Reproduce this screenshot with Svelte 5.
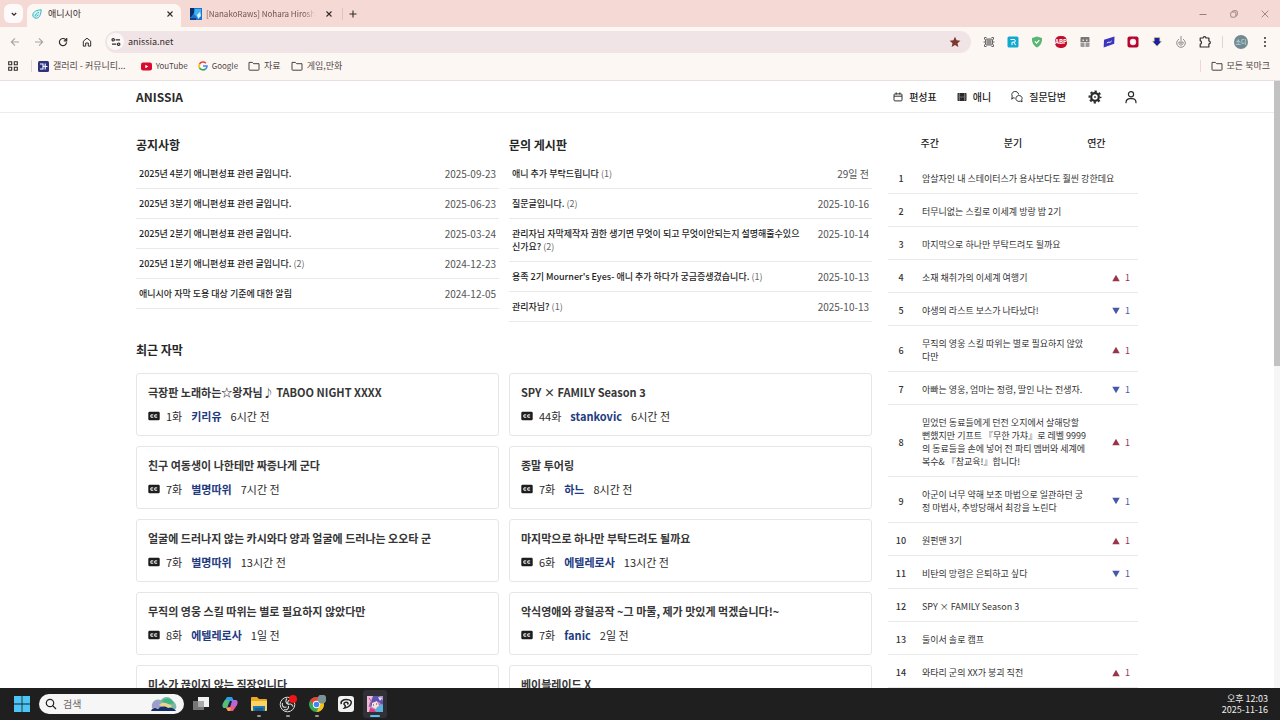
<script>
  const notices = [
    { title: '2025년 4분기 애니편성표 관련 글입니다.', date: '2025-09-23' },
    { title: '2025년 3분기 애니편성표 관련 글입니다.', date: '2025-06-23' },
    { title: '2025년 2분기 애니편성표 관련 글입니다.', date: '2025-03-24' },
    { title: '2025년 1분기 애니편성표 관련 글입니다.', count: 2, date: '2024-12-23' },
    { title: '애니시아 자막 도용 대상 기준에 대한 알림', date: '2024-12-05' },
  ];
  const inquiries = [
    { title: '애니 추가 부탁드립니다', count: 1, date: '29일 전' },
    { title: '질문글입니다.', count: 2, date: '2025-10-16' },
    { title: '관리자님 자막제작자 권한 생기면 무엇이 되고 무엇이안되는지 설명해줄수있으신가요?', count: 2, date: '2025-10-14' },
    { title: "용족 2기 Mourner's Eyes- 애니 추가 하다가 궁금증생겼습니다.", count: 1, date: '2025-10-13' },
    { title: '관리자님?', count: 1, date: '2025-10-13' },
  ];
  const boards = [
    { name: '공지사항', posts: notices },
    { name: '문의 게시판', posts: inquiries },
  ];
  const captions = [
    { title: '극장판 노래하는☆왕자님♪ TABOO NIGHT XXXX', ep: '1화', by: '키리유', ago: '6시간 전' },
    { title: 'SPY × FAMILY Season 3', ep: '44화', by: 'stankovic', ago: '6시간 전' },
    { title: '친구 여동생이 나한테만 짜증나게 군다', ep: '7화', by: '별명따위', ago: '7시간 전' },
    { title: '종말 투어링', ep: '7화', by: '하느', ago: '8시간 전' },
    { title: '얼굴에 드러나지 않는 카시와다 양과 얼굴에 드러나는 오오타 군', ep: '7화', by: '별명따위', ago: '13시간 전' },
    { title: '마지막으로 하나만 부탁드려도 될까요', ep: '6화', by: '에텔레로사', ago: '13시간 전' },
    { title: '무직의 영웅 스킬 따위는 별로 필요하지 않았다만', ep: '8화', by: '에텔레로사', ago: '1일 전' },
    { title: '악식영애와 광혈공작 ~그 마물, 제가 맛있게 먹겠습니다!~', ep: '7화', by: 'fanic', ago: '2일 전' },
    { title: '미소가 끊이지 않는 직장입니다' },
    { title: '베이블레이드 X' },
  ];
  const ranks = [
    { title: '암살자인 내 스테이터스가 용사보다도 훨씬 강한데요', move: 0 },
    { title: '터무니없는 스킬로 이세계 방랑 밥 2기', move: 0 },
    { title: '마지막으로 하나만 부탁드려도 될까요', move: 0 },
    { title: '소재 채취가의 이세계 여행기', move: 1 },
    { title: '야생의 라스트 보스가 나타났다!', move: -1 },
    { title: '무직의 영웅 스킬 따위는 별로 필요하지 않았다만', move: 1 },
    { title: '아빠는 영웅, 엄마는 정령, 딸인 나는 전생자.', move: -1 },
    { title: '믿었던 동료들에게 던전 오지에서 살해당할 뻔했지만 기프트 『무한 가챠』로 레벨 9999의 동료들을 손에 넣어 전 파티 멤버와 세계에 복수& 『참교육!』합니다!', move: 1 },
    { title: '아군이 너무 약해 보조 마법으로 일관하던 궁정 마법사, 추방당해서 최강을 노린다', move: -1 },
    { title: '원펀맨 3기', move: 1 },
    { title: '비탄의 망령은 은퇴하고 싶다', move: -1 },
    { title: 'SPY × FAMILY Season 3', move: 0 },
    { title: '둘이서 솔로 캠프', move: 0 },
    { title: '와타리 군의 XX가 붕괴 직전', move: 1 },
  ];
  let url = $state('anissia.net');
  let query = $state('');
</script>

{#snippet folder()}
  <svg class="i12" viewBox="0 0 12 12" fill="none" stroke="#47403f" stroke-width="1" stroke-linejoin="round"><path d="M1 9.600V2.400h3.400l1.200 1.300H11v5.900a.6.6 0 0 1-.6.6H1.600a.6.6 0 0 1-.6-.6z" /></svg>
{/snippet}

{#snippet cross()}
  <svg class="i8" viewBox="0 0 8 8" stroke="#332b2b" stroke-width="1.1"><path d="M1.5 1.5l5 5M6.5 1.5l-5 5" /></svg>
{/snippet}

<div class="screen">
  <div class="tabstrip">
    <button class="tab-search" aria-label="탭 검색"><svg class="i8" viewBox="0 0 8 8" fill="none" stroke="#332b2b" stroke-width="1.3"><path d="M1.8 3l2.2 2.2L6.2 3" /></svg></button>
    <div class="tab active">
      <svg class="i10" viewBox="0 0 10 10" fill="none" stroke="#2fb4c4"><path d="M9.2.8C5 1 .9 2.6.8 6c0 2 1.500 3.200 3.400 3.200C7.700 9.200 9 5 9.200.8z" fill="#d9f4f5" /><path d="M3 7.500C3 5.500 5 4 7 3.500M4.500 7.300l2-1.500" /></svg>
      <span>애니시아</span>
      <button class="plain" aria-label="탭 닫기">{@render cross()}</button>
    </div>
    <div class="tab idle">
      <svg class="i12" viewBox="0 0 12 12"><rect width="12" height="12" fill="#1b74d0" /><path d="M0 0h4v5L1 9H0z" fill="#0c2f68" /><path d="M5 1h6v6L7 9 4 6z" fill="#3eb4f2" /><path d="M7 7l3-3 1 4-3 3z" fill="#d8f1fb" /><path d="M0 10h6v2H0z" fill="#123f86" /></svg>
      <span>[NanakoRaws] Nohara Hiroshi</span>
      <button class="plain" aria-label="탭 닫기">{@render cross()}</button>
    </div>
    <i class="sep strip"></i>
    <button class="plain newtab" aria-label="새 탭"><svg class="i8" viewBox="0 0 8 8" stroke="#332b2b" stroke-width="1.1"><path d="M4 .5v7M.5 4h7" /></svg></button>
    <div class="window-buttons">
      <button class="plain" aria-label="최소화"><svg class="i8" viewBox="0 0 8 8" stroke="#94807e"><path d="M.5 4.500h7" /></svg></button>
      <button class="plain" aria-label="이전 크기로"><svg class="i8" viewBox="0 0 8 8" fill="none" stroke="#94807e" stroke-width=".9"><rect x=".7" y="2" width="5.200" height="5.200" rx="1.200" /><path d="M2.500 2V1.500Q2.500.7 3.400.7H6Q7.300.7 7.300 2v2.800q0 .9-.9.9h-.5" /></svg></button>
      <button class="plain" aria-label="닫기"><svg class="i8" viewBox="0 0 8 8" stroke="#94807e" stroke-width=".9"><path d="M.7.7l6.600 6.600M7.300.7L.7 7.300" /></svg></button>
    </div>
  </div>

  <div class="toolbar">
    <div class="nav-buttons">
      <button class="plain" aria-label="뒤로"><svg class="i10" viewBox="0 0 10 10" fill="none" stroke="#aaa1a0" stroke-width="1.100"><path d="M9 5H1.500M5 1.300L1.300 5 5 8.700" /></svg></button>
      <button class="plain" aria-label="앞으로"><svg class="i10" viewBox="0 0 10 10" fill="none" stroke="#aaa1a0" stroke-width="1.100"><path d="M1 5h7.500M5 1.300L8.700 5 5 8.700" /></svg></button>
      <button class="plain" aria-label="새로고침"><svg class="i10" viewBox="0 0 10 10" fill="none" stroke="#332b2b" stroke-width="1.200"><path d="M8.600 5.300A3.600 3.600 0 1 1 7.500 2.500l.8.800" /><path d="M8.700.9v2.900H5.800" /></svg></button>
      <button class="plain" aria-label="홈"><svg class="i10" viewBox="0 0 10 10" fill="none" stroke="#332b2b" stroke-width="1"><path d="M1.300 4.200L5 1.200l3.700 3v4.900H6.300V6H3.700v3.100H1.300z" /></svg></button>
    </div>
    <div class="omnibox">
      <button class="site-info" aria-label="사이트 정보"><svg class="i10" viewBox="0 0 10 10" fill="none" stroke="#332b2b" stroke-width="1.200"><circle cx="2.200" cy="2.800" r="1.200" /><path d="M4.600 2.800H9M1 7.200h4.300" /><circle cx="7.700" cy="7.200" r="1.200" /></svg></button>
      <input class="url" aria-label="주소창" bind:value={url} />
      <button class="plain" aria-label="북마크 수정"><svg class="i12" viewBox="0 0 12 12" fill="#7c382c"><path d="M6 .8l1.600 3.500 3.800.4-2.900 2.600.9 3.800L6 9.100l-3.400 2 .9-3.800L.6 4.700l3.800-.4z" /></svg></button>
    </div>
    <div class="extensions">
      <button class="plain" aria-label="화면 캡처"><svg viewBox="0 0 14 14" fill="none" stroke="#666" stroke-width="1"><path d="M2.500 4.500v-2h2M9.500 2.500h2v2M11.500 9.500v2h-2M4.500 11.500h-2v-2" /><rect x="3.500" y="4" width="7" height="6" rx="1" fill="#bbb" /><path d="M1.500 7h2M10.500 7h2M5 6h4M5 8h4" /></svg></button>
      <button class="plain" aria-label="RIDI"><svg viewBox="0 0 14 14" fill="none"><rect x="1.500" y="1.500" width="11" height="11" rx="1.500" fill="#12a9cf" /><path d="M4.500 4.500H8a1.300 1.300 0 0 1 0 2.700H6v3M8 7.200l1.600 3" stroke="#fff" /></svg></button>
      <button class="plain" aria-label="보호"><svg viewBox="0 0 14 14" fill="none"><path d="M7 1.500l5 1.500c.3 4-1.200 7.500-5 9.500-3.800-2-5.300-5.500-5-9.500z" fill="#5bb673" /><path d="M4.900 6.300l1.700 1.800 2.700-3" stroke="#fff" stroke-width="1.200" /></svg></button>
      <button class="abp" aria-label="광고 차단">ABP</button>
      <button class="plain" aria-label="선물"><svg viewBox="0 0 14 14"><path d="M2.500 3q0-1 1-1h7q1 0 1 1v4h-9z" fill="#777" /><path d="M2.500 7.500h4V12h-3q-1 0-1-1zM7.500 7.500h4V11q0 1-1 1h-3z" fill="#999" /><path d="M4.500 4.500H6v1.500H4.500zM8 4.500h1.500v1.500H8z" fill="#ddd" /></svg></button>
      <button class="plain" aria-label="번역"><svg viewBox="0 0 14 14"><path d="M2 4.800L12.500 1.500l-.3 7.200L1.700 12.500z" fill="#3c35bd" /><path d="M4.800 8l2.200-1 1 .5 1.700-1.600" fill="none" stroke="#fff" stroke-width=".9" /></svg></button>
      <button class="plain" aria-label="녹화"><svg viewBox="0 0 14 14"><rect x="1.500" y="1.500" width="11" height="11" rx="2" fill="#b5062e" /><circle cx="7" cy="7" r="3.200" fill="#ffdfe5" /><circle cx="7" cy="7" r="2" fill="#fff" /></svg></button>
      <button class="plain" aria-label="다운로드"><svg viewBox="0 0 14 14"><path d="M4.200 2.500h5.600v3.700h2L7 11.300 2.200 6.200h2z" fill="#1c1fa8" stroke="#e8d86a" stroke-width=".6" /></svg></button>
      <button class="plain" aria-label="이미지 저장"><svg viewBox="0 0 14 14" fill="none" stroke="#8b8b8b"><path d="M5 4.200a4.300 4.300 0 1 0 4 0" /><path d="M5.300 6.500a2.200 2.200 0 1 0 3.400 0M7 1v7.500M5.500 7l1.500 1.500L8.500 7" /></svg></button>
      <button class="plain" aria-label="확장 프로그램"><svg viewBox="0 0 14 14" fill="none" stroke="#332b2b" stroke-width="1.200" stroke-linejoin="round"><path d="M2.200 3h2.900q0-1.300 1.400-1.300T7.900 3h3v3q1.400 0 1.400 1.400t-1.400 1.400V12H2.200V9.200q1.300 0 1.300-1.700T2.200 5.800z" /></svg></button>
    </div>
    <i class="sep"></i>
    <button class="avatar" aria-label="프로필">소디</button>
    <button class="plain more" aria-label="메뉴"><svg class="i10" viewBox="0 0 10 10" fill="#332b2b"><circle cx="5" cy="1" r="1" /><circle cx="5" cy="5" r="1" /><circle cx="5" cy="9" r="1" /></svg></button>
  </div>

  <nav class="bookmarks" aria-label="북마크">
    <button class="plain all-apps" aria-label="앱"><svg class="i10" viewBox="0 0 10 10" fill="none" stroke="#332b2b" stroke-width="1.100"><path d="M.7.7h3v3h-3zM6.300.7h3v3h-3zM.7 6.300h3v3h-3zM6.300 6.300h3v3h-3z" /></svg></button>
    <i class="sep"></i>
    <a class="first" href="#gallery"><svg class="i11" viewBox="0 0 11 11"><rect width="11" height="11" rx="1.500" fill="#2f327f" /><path d="M2 3h3v5H2M5 5.300h2M7.200 2.500v6M7.200 5.500H9.500" fill="none" stroke="#fff" stroke-width="1.100" /></svg>갤러리 - 커뮤니티...</a>
    <a class="latin yt" href="#youtube"><svg class="i11" viewBox="0 0 11 11"><rect y="1.500" width="11" height="8" rx="2" fill="#d90a2c" /><path d="M4.300 3.700l3 1.800-3 1.800z" fill="#fff" /></svg>YouTube</a>
    <a class="latin" href="#google"><svg class="i10" viewBox="0 0 10 10" fill="none" stroke-width="1.600"><path d="M7.900 2.200A4 4 0 0 0 1.500 3.200" stroke="#ea4335" /><path d="M1.600 3a4 4 0 0 0 0 4" stroke="#fbbc05" /><path d="M1.500 6.800a4 4 0 0 0 6 1.200" stroke="#34a853" /><path d="M5 5h4a4 4 0 0 1-1.500 3.100" stroke="#4285f4" /></svg>Google</a>
    <a href="#data">{@render folder()}자료</a>
    <a href="#games">{@render folder()}게임,만화</a>
    <span class="grow"></span>
    <i class="sep pink"></i>
    <a href="#all">{@render folder()}모든 북마크</a>
  </nav>

  <div class="viewport">
    <div class="page">
      <header>
        <div class="wrap head">
          <a class="brand" href="#home">ANISSIA</a>
          <nav class="menu" aria-label="주 메뉴">
            <a href="#schedule"><svg class="i10" viewBox="0 0 10 10" fill="none" stroke="#333"><rect x="1" y="1.900" width="8" height="7" rx="1" /><path d="M1 4.200h8M3.200.4v2.200M6.800.4v2.200" /></svg>편성표</a>
            <a href="#anime"><svg class="i10" viewBox="0 0 10 10"><rect x=".5" y="1" width="9" height="8" rx=".8" fill="#292929" /><path d="M2.500 1v8M7.500 1v8M.5 3h2M.5 5h2M.5 7h2M7.500 3h2M7.500 5h2M7.500 7h2M2.500 5h5" stroke="#aaa" stroke-width=".5" /></svg>애니</a>
            <a href="#qna"><svg class="i12" viewBox="0 0 12 12" fill="none" stroke="#333" stroke-linejoin="round"><path d="M1.900 6.900L.8 8.300 1.200 5A3.400 3.100 0 1 1 7.600 3.500" /><path d="M1.900 6.900l1.800.1M4.900 7.300a3.100 2.800 0 1 1 5.800 1.400l.4 2.200-1.700-.8a3.100 2.800 0 0 1-4.500-2.800z" /></svg>질문답변</a>
            <button class="plain" aria-label="설정"><svg class="i14" viewBox="0 0 14 14" fill="none" stroke="#282828"><circle cx="7" cy="7" r="3.800" stroke-width="2.200" /><circle cx="7" cy="7" r="5.600" stroke-width="1.800" stroke-dasharray="2.300 2.098" stroke-dashoffset="1.150" /><circle cx="7" cy="7" r="1.100" fill="#555" stroke="none" /></svg></button>
            <button class="plain" aria-label="내 계정"><svg class="i14" viewBox="0 0 14 14" fill="none" stroke="#282828" stroke-width="1.200" stroke-linecap="round"><circle cx="7" cy="4.300" r="2.600" /><path d="M2 12.700c0-2.500 1.700-4 4-4h2c2.300 0 4 1.500 4 4" /></svg></button>
          </nav>
        </div>
      </header>

      <div class="wrap body">
        <main>
          <div class="boards">
            {#each boards as board}
              <section>
                <h2>{board.name}</h2>
                <ul>
                  {#each board.posts as post}
                    <li>
                      <a href="#post">{post.title}{#if post.count}&nbsp;<small>({post.count})</small>{/if}</a>
                      <time>{post.date}</time>
                    </li>
                  {/each}
                </ul>
              </section>
            {/each}
          </div>
          <h2 class="recent">최근 자막</h2>
          <div class="cards">
            {#each captions as c}
              <article>
                <h3>{c.title}</h3>
                <p>
                  <svg class="i12" viewBox="0 0 12 12"><rect x=".3" y="1.700" width="11.400" height="8.600" rx="1.200" fill="#1d1d1d" /><path d="M5.300 4.900H2.900v2.300h2.400M9.200 4.900H6.800v2.300h2.400" fill="none" stroke="#fff" /></svg>
                  {#if c.ep}<span>{c.ep}</span><a href="#user">{c.by}</a><span>{c.ago}</span>{/if}
                </p>
              </article>
            {/each}
          </div>
        </main>

        <aside>
          <div class="periods"><button>주간</button><button>분기</button><button>연간</button></div>
          <ol>
            {#each ranks as r, i}
              <li>
                <b>{i + 1}</b>
                <a href="#anime" class:wide={r.move === 0}>{r.title}</a>
                {#if r.move !== 0}
                  <span class="move" class:down={r.move < 0}><svg class="i8" viewBox="0 0 8 8"><path d={r.move > 0 ? 'M4 .7L7.700 7.300H.3z' : 'M4 7.300L.3.7h7.400z'} fill="currentColor" /></svg><em>{Math.abs(r.move)}</em></span>
                {/if}
              </li>
            {/each}
          </ol>
        </aside>
      </div>
    </div>
    <div class="scrollbar"><i></i></div>
  </div>

  <footer>
    <button class="plain start" aria-label="시작"><svg class="i16" viewBox="0 0 16 16" fill="#4cc6f4"><path d="M0 0h7.600v7.600H0zM8.400 0H16v7.600H8.400zM0 8.400h7.600V16H0zM8.400 8.400H16V16H8.400z" /></svg></button>
    <label class="search">
      <svg class="i12" viewBox="0 0 12 12" fill="none" stroke="#222" stroke-width="1.200"><circle cx="5" cy="5" r="3.700" /><path d="M7.700 7.700l3.300 3.300" /></svg>
      <input type="search" aria-label="검색" placeholder="검색" bind:value={query} />
      <svg class="art" viewBox="0 0 30 16"><path d="M3 12C2 6 6 2 12 4c3-4 9-4 12 1 3 2 4 5 3 8z" fill="#7fb9a6" /><path d="M3 11C3 6 7 4 11 6l4 5z" fill="#a996d9" /><path d="M13 5c4-4 9-3 12 2l-8 2z" fill="#3fb585" /><path d="M10 9c4-4 8-2 13 1l-4 3z" fill="#ecd487" /><path d="M2 15c1-3 4-4 7-2 3-3 7-3 10-1 4-1 7 1 8 3z" fill="#152f6b" /></svg>
    </label>
    <div class="apps">
      <button class="plain" aria-label="작업 보기"><svg viewBox="0 0 18 18"><path d="M6 2h11v10H6z" fill="#f2f2f2" /><path d="M1 6h11v9H1z" fill="#777" /><path d="M6 6h6v6H6z" fill="#aaa" /></svg></button>
      <button class="plain" aria-label="Copilot"><svg viewBox="0 0 18 18"><path d="M6 2h5l2 4H9L6 13H3Q.5 12 2 8z" fill="#2a9fe8" /><path d="M2 9l2-4h4l-2 8H3Q1 12 2 9z" fill="#54c26a" /><path d="M12 16H7l-2-4h4l3-7h3q2.500 1 1 5z" fill="#e85b8c" /><path d="M11 5h3q3 0 2 4l-1 2h-5z" fill="#b267dd" /><path d="M7 16l-2-3h5l-1 3z" fill="#f5a941" /></svg></button>
      <button class="plain run" aria-label="파일 탐색기"><svg viewBox="0 0 18 18"><path d="M1 3q0-1 1-1h5l2 2h7q1 0 1 1v3H1z" fill="#e9a925" /><path d="M1 6h16v9q0 1-1 1H2q-1 0-1-1z" fill="#fcd462" /><path d="M3 11h12v5H3z" fill="#2377b5" /><path d="M5 13h8v3H5z" fill="#1a5d94" /></svg></button>
      <button class="plain run" aria-label="OBS"><svg viewBox="0 0 18 18"><circle cx="8.500" cy="9.500" r="7.300" fill="#242424" stroke="#ddd" /><path d="M8 3.500c-2 2-1 5 1 5.500M14 11.500c-1-3-4-3-5.200-1.500M5 14.500c3 1 5-1 4.500-3.500M3.500 8c-1 3 1 5 4 4M12 5.500c-2-1-4 1-3 3.500" fill="none" stroke="#ddd" stroke-width="1.100" /><circle cx="14" cy="4" r="4" fill="#f01414" /></svg></button>
      <button class="plain run" aria-label="Chrome"><svg viewBox="0 0 18 18"><circle cx="8.500" cy="9.500" r="7.500" fill="#35a853" /><path d="M2 5.800A7.500 7.500 0 0 1 15 5.800L11.500 9.500h-6z" fill="#e94235" /><path d="M15 5.800A7.500 7.500 0 0 1 8.500 17l3.200-6.500L9 5.800z" fill="#fbc116" /><circle cx="8.500" cy="9.500" r="3.700" fill="#fff" /><circle cx="8.500" cy="9.500" r="2.800" fill="#4285f4" /><circle cx="14" cy="4" r="4.500" fill="#7b9297" /></svg></button>
      <button class="plain" aria-label="Clip Studio"><svg viewBox="0 0 18 18"><rect x="1" y="1" width="16" height="16" rx="3" fill="#f1f1f1" /><path d="M4.500 9C3 6.500 6 4.500 9.500 4.500c4 0 5.500 2 4.500 4.300-.9 2-3.500 3.700-6.500 4.200 1.200-1.200 1-2.300.2-2.900C6.300 9.200 7 7.300 9 7.300c2.200 0 2.700 1.200 1.300 2" fill="none" stroke="#222" stroke-width="1.500" /></svg></button>
      <button class="plain current" aria-label="게임"><svg viewBox="0 0 18 18"><rect x="1" y="1" width="16" height="16" fill="#ae93d4" /><path d="M1 1h6L3 9l2 8H1z" fill="#f0b9d6" /><path d="M7 1h6l4 5v5l-4-4-5 1-4 4z" fill="#5d54ad" /><path d="M6 8l5-2 2 5-3 3-4-2z" fill="#fbe1da" /><path d="M11 12l6-3v8h-8z" fill="#59b2dd" /><path d="M4 13l4 1 2 3H3z" fill="#d93f78" /><path d="M12 2l4 1-2 3z" fill="#f4e5f3" /><path d="M7 10h1M10 9h1" stroke="#422c72" /><path d="M3 3l2 3M15 8l-2 2M5 7l-2 5" stroke="#c44f92" /></svg></button>
    </div>
    <div class="clock"><span>오후 12:03</span><span>2025-11-16</span></div>
  </footer>
</div>

<style>
  :global(body) { margin: 0; }
  .screen {
    display: flex; flex-direction: column; height: 100vh; overflow: hidden;
    background: #fff; color: #332b2b;
    font: 9px/14px "Noto Sans CJK KR", sans-serif;
  }
  .screen * { box-sizing: border-box; }
  a { color: inherit; text-decoration: none; }
  button, input { font: inherit; color: inherit; border: 0; padding: 0; background: none; }
  button { cursor: pointer; }
  input { outline: none; min-width: 0; }
  ul, ol { list-style: none; margin: 0; padding: 0; }
  h2, h3, p { margin: 0; }
  svg { display: block; flex: none; }
  .plain { display: flex; align-items: center; justify-content: center; }
  .i8 { width: 8px; height: 8px; }
  .i10 { width: 10px; height: 10px; }
  .i11 { width: 11px; height: 11px; }
  .i12 { width: 12px; height: 12px; }
  .i14 { width: 14px; height: 14px; }
  .i16 { width: 16px; height: 16px; }
  .grow { flex: 1; }
  .sep { width: 1px; height: 12px; background: #e4d3d2; }
  .sep.pink { background: #f5d5d3; }
  .sep.strip { background: #e3c1be; }

  .tabstrip { display: flex; align-items: center; flex: none; height: 27px; padding-left: 4px; background: #f5d9d5; }
  .tab-search { display: flex; align-items: center; justify-content: center; width: 19px; height: 19px; border-radius: 6px; background: #fffafa; }
  .tab { display: flex; align-items: center; height: 23px; }
  .tab span { flex: 1; overflow: hidden; white-space: nowrap; }
  .active { align-self: flex-end; width: 154px; margin-left: 4px; padding: 0 7px 3px 5px; gap: 6px; border-radius: 7px 7px 0 0; background: #fdf7f4; }
  .idle { width: 161px; padding: 0 9px 0 9px; gap: 4px; color: #6c5452; font-size: 8px; }
  .idle span { margin-right: 6px; -webkit-mask-image: linear-gradient(90deg, #000 90%, transparent); mask-image: linear-gradient(90deg, #000 90%, transparent); }
  .newtab { padding-left: 6px; }
  .window-buttons { display: flex; gap: 23px; margin-left: auto; padding-right: 11px; }

  .toolbar { display: flex; align-items: center; flex: none; height: 29px; padding-right: 10px; background: #fdf7f4; }
  .nav-buttons { display: flex; gap: 14px; padding: 0 13px 0 10px; }
  .omnibox { display: flex; align-items: center; flex: 1; height: 22px; padding: 0 10px 0 2px; border-radius: 11px; background: #f0e4e6; }
  .site-info { display: flex; align-items: center; justify-content: center; width: 17px; height: 17px; border-radius: 9px; background: #fdf8f8; }
  .url { flex: 1; padding-left: 4px; }
  .extensions { display: flex; gap: 10px; padding: 0 10px 0 11px; }
  .extensions svg { width: 14px; height: 14px; }
  .abp { width: 12px; height: 12px; margin: 1px; border-radius: 5px; background: #c70d2c; color: #fff; font-size: 6px; line-height: 12px; font-weight: 700; }
  .avatar { width: 14px; height: 14px; margin-left: 11px; border-radius: 7px; background: #6f8a90; color: #dfe8ea; font-size: 6px; line-height: 14px; }
  .more { margin-left: 12px; }

  .bookmarks { display: flex; align-items: center; flex: none; height: 25px; padding: 0 10px 4px 8px; gap: 10px; background: #fdf7f4; border-bottom: 1px solid #e6dfdd; color: #514746; }
  .bookmarks a { display: flex; align-items: center; gap: 4px; white-space: nowrap; }
  .bookmarks .all-apps { margin-right: 3px; }
  .bookmarks .first { margin-left: -4px; }
  .bookmarks .yt { margin-left: 5px; }
  .bookmarks .latin { font-size: 8px; }

  .viewport { display: flex; flex: 1; min-height: 0; }
  .page { flex: 1; overflow: hidden; }
  .scrollbar { width: 6px; background: #f6f6f6; }
  .scrollbar i { display: block; height: 47%; background: #c2c2c2; }
  .wrap { max-width: 1002px; margin: 0 auto; }
  header { border-bottom: 1px solid #ececec; }
  .head { display: flex; align-items: center; justify-content: space-between; height: 31px; }
  .brand { font-size: 12px; font-weight: 700; color: #2b2b2b; }
  .menu { display: flex; align-items: center; gap: 20px; font-size: 10px; font-weight: 500; color: #222; }
  .menu a { display: flex; align-items: center; gap: 6px; }
  .menu button { margin-left: 2px; }

  .body { display: flex; gap: 16px; }
  main { flex: 736; min-width: 0; padding-top: 23px; }
  aside { flex: 250; min-width: 0; }
  h2 { font-size: 12px; line-height: 18px; font-weight: 700; color: #262626; }
  .boards { display: grid; grid-template-columns: 1fr 1fr; gap: 10px; }
  .boards ul { padding-top: 5px; }
  .boards li { display: flex; gap: 12px; padding: 8px 3px; border-bottom: 1px solid #e9e9e9; line-height: 13px; }
  .boards li a { flex: 1; font-weight: 500; color: #1d1d1d; word-break: break-all; }
  small { font-size: 9px; font-weight: 400; color: #666; }
  time { font-size: 10px; color: #555; white-space: nowrap; }
  .recent { padding: 19px 0 14px; }
  .cards { display: grid; grid-template-columns: 1fr 1fr; gap: 10px; }
  article { padding: 10px 11px 11px; border: 1px solid #e6e6e6; border-radius: 3px; font-size: 11px; }
  h3 { font-size: 11px; line-height: 16px; font-weight: 700; color: #363636; white-space: nowrap; }
  article p { display: flex; align-items: center; gap: 9px; height: 24px; padding-top: 8px; line-height: 16px; color: #2c2c2c; }
  article p svg { margin-right: -3px; }
  article a { font-weight: 700; color: #223a80; }

  .periods { display: grid; grid-template-columns: 1fr 1fr 1fr; padding: 20px 0 8px; }
  .periods button { height: 20px; font-size: 10px; font-weight: 500; color: #222; }
  aside li { display: flex; align-items: center; padding: 11px 8px 8px 0; border-bottom: 1px solid #e9e9e9; line-height: 13px; color: #333; }
  aside b { width: 26px; margin-right: 8px; text-align: center; font-weight: 500; color: #333; }
  aside li a { width: 166px; flex: none; word-break: break-all; }
  aside li a.wide { width: auto; flex: 1; }
  .move { display: flex; align-items: center; gap: 5px; margin-left: auto; color: #98354b; }
  .move em { font-style: normal; }
  .move.down { color: #4659a6; }

  footer { display: flex; align-items: center; flex: none; height: 32px; padding: 0 12px 0 14px; background: #1f1f20; }
  .search { display: flex; align-items: center; width: 145px; height: 20px; margin-left: 9px; padding: 0 5px 0 6px; gap: 6px; border-radius: 10px; background: #f6f6f6; }
  .search input { flex: 1; width: 40px; appearance: none; font-size: 10px; }
  .search input::placeholder { color: #666; opacity: 1; }
  .art { width: 30px; height: 18px; }
  .apps { display: flex; gap: 5px; margin-left: 5px; }
  .apps button { position: relative; width: 24px; height: 28px; border-radius: 3px; }
  .apps svg { width: 18px; height: 18px; }
  .run::after, .current::after { content: ""; position: absolute; bottom: 1px; width: 4px; height: 2px; border-radius: 1px; background: #999; }
  .current { background: #303136; }
  .current::after { width: 10px; background: #5cc0f0; }
  .clock { display: flex; flex-direction: column; margin-left: auto; text-align: right; line-height: 11px; color: #eee; }
</style>
